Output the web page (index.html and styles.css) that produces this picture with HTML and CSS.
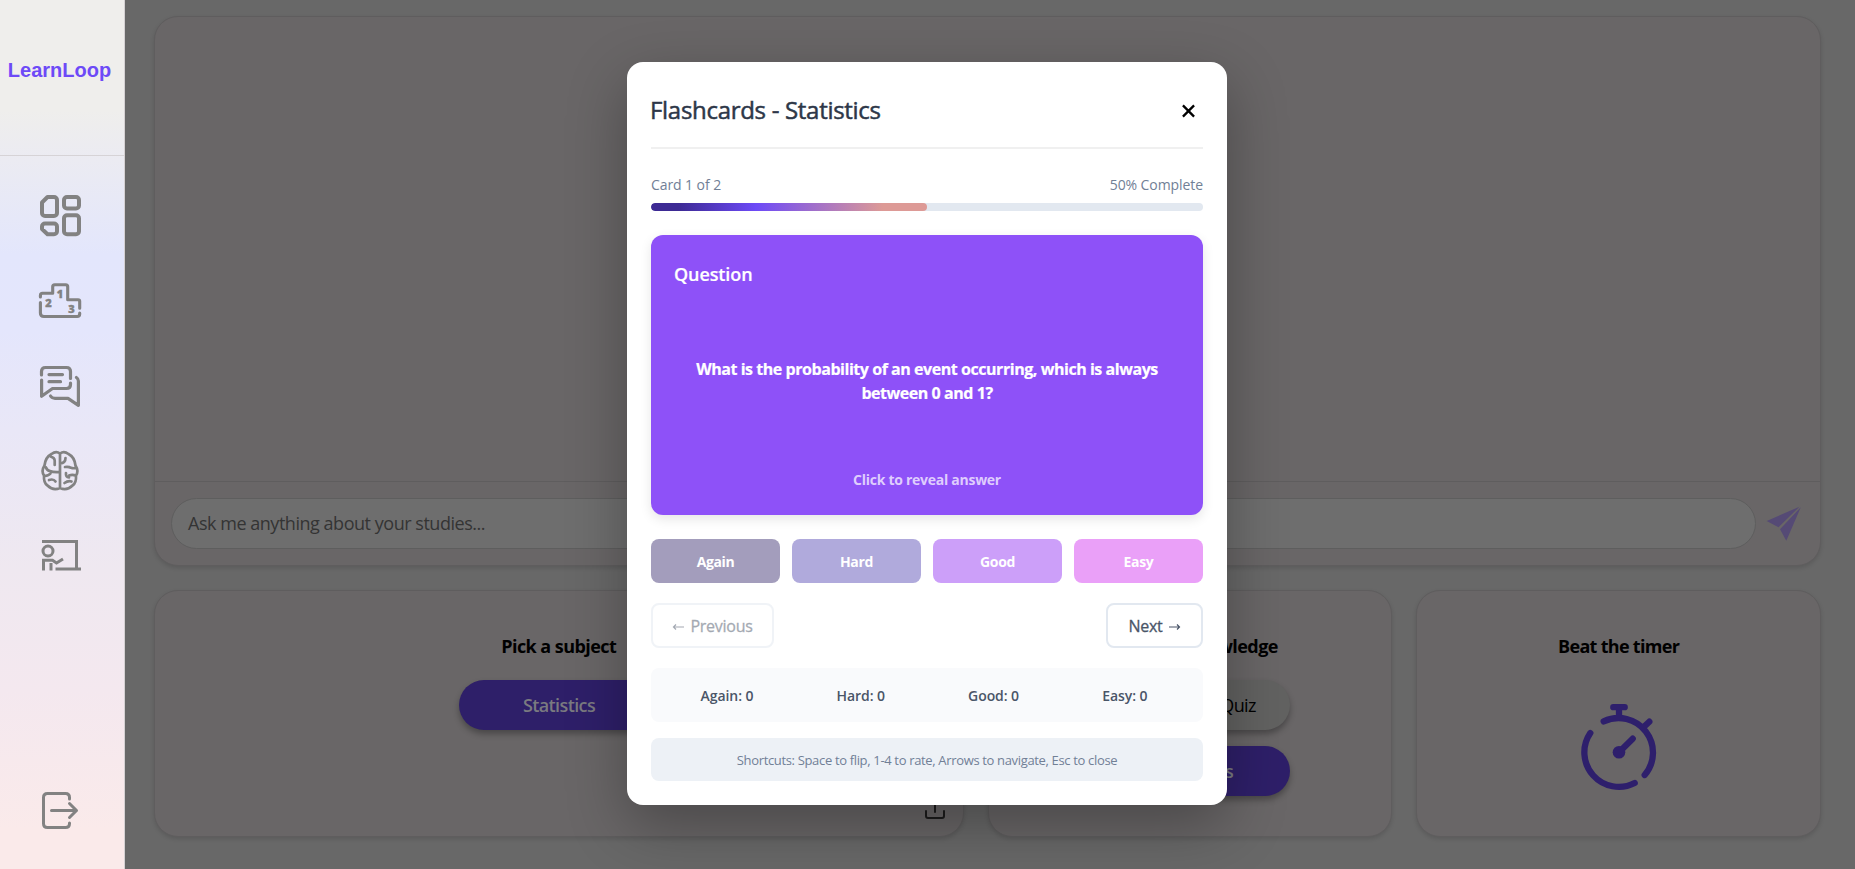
FILE: index.html
```html
<!DOCTYPE html>
<html lang="en">
<head>
<meta charset="utf-8">
<title>LearnLoop</title>
<link rel="stylesheet" href="styles.css">
</head>
<body>
<div class="app">
  <aside class="sidebar">
    <div class="brand"><span class="brand-name">LearnLoop</span></div>
    <nav class="nav">
      <svg class="nav-icon" viewBox="0 0 50 50"><g fill="none" stroke="currentColor" stroke-width="4" stroke-linejoin="round"><path d="M12.500 7h6.500a3 3 0 0 1 3 3v13a3 3 0 0 1-3 3H10a3 3 0 0 1-3-3V12.500z"/><rect x="29" y="7" width="15" height="11.500" rx="3"/><rect x="29" y="25.200" width="15" height="19" rx="3"/><path d="M10 33.500h9a3 3 0 0 1 3 3v4.700a3 3 0 0 1-3 3H12.500L7 39V36.500a3 3 0 0 1 3-3z"/></g></svg>
      <svg class="nav-icon" viewBox="0 0 50 50"><g fill="none" stroke="currentColor" stroke-width="3.100" stroke-linecap="round" stroke-linejoin="round"><path d="M5.400 22V20.500q0-2.200 2.200-2.200H17.700v-6.500q0-2 2-2h11q2 0 2 2v12.900h10.300q1.700 0 1.700 1.700v6.800M44.700 38v1q0 2.500-2.500 2.500H9q-3.600 0-3.600-3.600V27.500"/></g><g fill="currentColor" class="podium-digits"><text x="21.700" y="23.200">1</text><text x="10.300" y="32">2</text><text x="33.300" y="38">3</text></g></svg>
      <svg class="nav-icon" viewBox="0 0 50 50"><g fill="none" stroke="currentColor" stroke-width="3.200" stroke-linecap="round" stroke-linejoin="round"><path d="M6.500 15V11.500q0-4 4-4h21q4 0 4 4V18.500M35.500 23v1.500q0 4-4 4H17.500L6.600 36.300V20M14 14.600h13.500M14 21.700h11.500M15.500 36q1.500 2.300 4.500 2.300h13l10.400 7V21q0-2.300-2-3.500"/></g></svg>
      <svg class="nav-icon" viewBox="0 0 50 50"><g fill="none" stroke="currentColor" stroke-width="2.700" stroke-linecap="round" stroke-linejoin="round"><path d="M25 8.500Q21 5.500 16.500 9 10.500 12 9.500 20.500 6 26 9 30.500 8.500 38 12.500 40.500 18 46 25 43M25 8.500Q29 5.500 33.500 9 39.500 12 40.500 20.500 44 26 41 30.500 41.500 38 37.500 40.500 32 46 25 43M25 8.500V43M16 11.700q3.500 .8 3.700 3.800v4.500M11 22.500q1 3 4 3.500 3 1.500 10 1M9.500 31q4.500-.5 6-2.500M14 35q4.500-1.500 6.500 1.500M25 18.500q5.500-.5 5.500-5.500M30 22q4-.5 6 .8 3 1 5-.3M31 28q-.5 4.500 3 4.500M34 30.500q4-1.500 7 .5M29.500 38q3.500-2.500 7-1.500"/></g></svg>
      <svg class="nav-icon" viewBox="0 0 50 50"><g fill="none" stroke="currentColor" stroke-width="3"><path d="M7 11.500h34.500v28M20.500 39H46M8.500 40.500V30.300h9l4 2.700 6.500-4M16 40.500V33"/><circle cx="13" cy="21" r="5"/></g></svg>
    </nav>
    <div class="logout"><svg class="nav-icon" viewBox="0 0 50 50"><g fill="none" stroke="currentColor" stroke-width="3" stroke-linecap="round" stroke-linejoin="round"><path d="M34.500 12V10.500q0-4-4-4H12.500q-4 0-4 4v26q0 4 4 4h18q4 0 4-4V36M16.500 23.500h25M34.500 16.500l7 7-7 7"/></g></svg></div>
  </aside>

  <main class="content">
    <section class="panel chat">
      <div class="messages"></div>
      <div class="composer">
        <div class="prompt"><span class="prompt-text">Ask me anything about your studies...</span></div>
        <svg class="send" viewBox="0 0 36 36"><path fill="currentColor" d="M33.500 .7L.7 15l11.800 6.300zM34.800 1.200L14 23.300l6.300 11.500z"/></svg>
      </div>
    </section>
    <div class="row">
      <section class="panel tile">
        <h2 class="tile-title">Pick a subject</h2>
        <div class="pills subject-pills"><span class="pill pill-primary"><span class="pill-label">Statistics</span></span></div>
        <svg class="upload" viewBox="0 0 24 24"><path fill="none" stroke="currentColor" stroke-width="2" stroke-linecap="round" stroke-linejoin="round" d="M3 14v5a2 2 0 0 0 2 2h14a2 2 0 0 0 2-2v-5M12 15V3M7 7l5-5 5 5"/></svg>
      </section>
      <section class="panel tile">
        <h2 class="tile-title">Test your knowledge</h2>
        <div class="pills test-pills">
          <span class="pill pill-muted"><span class="pill-label">Quiz</span></span>
          <span class="pill pill-primary"><span class="pill-label">Flashcards</span></span>
        </div>
      </section>
      <section class="panel tile">
        <h2 class="tile-title timer-title">Beat the timer</h2>
        <svg class="timer" viewBox="0 0 80 90"><g fill="none" stroke="currentColor" stroke-width="6.300" stroke-linecap="round"><path d="M34.300 5.200H45.700M40 6v9M24.700 19.400A34.500 34.500 0 0 1 65.700 73M55.700 81A34.500 34.500 0 0 1 11.300 31M65 24.700l5.300-5M40 50.300l13.700-13.600"/></g><circle cx="40" cy="50.300" r="6.300" fill="currentColor"/></svg>
      </section>
    </div>
  </main>
</div>

<div class="overlay">
  <div class="modal">
    <header class="modal-header">
      <h1 class="modal-title">Flashcards - Statistics</h1>
      <svg class="close" viewBox="0 0 14 14"><path stroke="currentColor" stroke-width="2.500" d="M1 1l12 12M13 1L1 13"/></svg>
    </header>
    <div class="progress-info"><span class="count">Card 1 of 2</span><span class="percent">50% Complete</span></div>
    <div class="bar"><div class="bar-fill" style="width:50%"></div></div>
    <div class="flashcard">
      <div class="card-label"><span>Question</span></div>
      <p class="question">What is the probability of an event occurring, which is always<br>between 0 and 1?</p>
      <div class="hint"><span>Click to reveal answer</span></div>
    </div>
    <div class="ratings">
      <span class="rate again">Again</span><span class="rate hard">Hard</span><span class="rate good">Good</span><span class="rate easy">Easy</span>
    </div>
    <div class="pager">
      <span class="page-btn prev"><svg class="arrow" viewBox="0 0 12 8"><path d="M12 4H1.500M4 1.500L1.500 4 4 6.500"/></svg><span>Previous</span></span>
      <span class="page-btn next"><span>Next</span><svg class="arrow" viewBox="0 0 12 8"><path d="M0 4h10.500M8 1.500L10.500 4 8 6.500"/></svg></span>
    </div>
    <div class="stats"><span>Again: 0</span><span>Hard: 0</span><span>Good: 0</span><span>Easy: 0</span></div>
    <div class="shortcuts"><span>Shortcuts: Space to flip, 1-4 to rate, Arrows to navigate, Esc to close</span></div>
  </div>
</div>
</body>
</html>
```
FILE: styles.css
```css
* { box-sizing: border-box; }
body {
  margin: 0;
  height: 869px;
  overflow: hidden;
  font-family: "Open Sans", "Noto Sans", sans-serif;
  background: #686868;
}
h1, h2, p { margin: 0; }
.app { display: flex; height: 869px; }

.sidebar {
  width: 125px;
  flex: none;
  display: flex;
  flex-direction: column;
  border-right: 1px solid #d5d1d3;
  color: #828282;
  background: linear-gradient(180deg, #efeeec 0, #efeeec 110px, #ebebf2 160px, #e3e6fc 255px, #e4e6fc 330px, #e9e7f7 430px, #efe8f0 570px, #f4e8ef 690px, #faeaea 830px, #faeaea 100%);
}
.brand {
  height: 156px;
  padding-top: 57px;
  border-bottom: 1px solid #d6d3d6;
  text-align: center;
}
.brand-name {
  font: bold 20px/26px "Liberation Sans", Arial, sans-serif;
  color: #6d4af7;
  margin-right: 5px;
}
.nav { display: flex; flex-direction: column; gap: 35px; padding: 34px 0 0 35px; }
.nav-icon { display: block; width: 50px; height: 50px; }
.podium-digits { font: 800 11px "Open Sans", sans-serif; stroke: currentColor; stroke-width: 0.400px; }
.logout { margin-top: auto; padding: 0 0 32px 35px; }

.content {
  flex: 1;
  padding: 16px 34px 32px 29px;
  display: flex;
  flex-direction: column;
  gap: 24px;
  color: #000;
}
.panel {
  background: #696667;
  border: 1px solid #5f5d5e;
  border-radius: 24px;
  box-shadow: 0 2px 4px rgba(0, 0, 0, 0.13);
}
.chat { height: 550px; display: flex; flex-direction: column; }
.messages { flex: 1; }
.composer {
  height: 84px;
  border-top: 1px solid #5f5d5e;
  padding: 16px 18px 16px 16px;
  display: flex;
  justify-content: space-between;
}
.prompt {
  width: 1585px;
  height: 51px;
  border: 1px solid #5e5e5e;
  border-radius: 26px;
  background: #6e6e6e;
  padding-left: 16px;
  font-size: 18px;
  line-height: 49px;
  color: #343434;
}
.prompt-text { letter-spacing: -0.470px; }
.send { width: 36px; height: 36px; margin: 8px 0 0; color: #554a75; }

.row { flex: none; display: grid; grid-template-columns: 2fr 1fr 1fr; gap: 24px; height: 247px; }
.tile { position: relative; display: flex; flex-direction: column; align-items: center; padding-top: 41px; }
.tile-title { font-size: 18px; line-height: 28px; font-weight: 700; letter-spacing: -0.550px; }
.timer-title { letter-spacing: -0.700px; }
.pills { display: grid; gap: 16px; margin-top: 20px; width: 200px; }
.subject-pills { align-self: flex-start; margin-left: 304px; }
.pill { height: 50px; border-radius: 25px; box-shadow: 0 4px 6px rgba(0, 0, 0, 0.3); text-align: center; font-size: 18px; line-height: 50px; }
.pill-primary { background: #2e1f69; color: #7a7a80; font-weight: 600; }
.pill-muted { background: #626261; text-align: right; padding-right: 34px; }
.pill-label { letter-spacing: -0.600px; }
.upload { position: absolute; right: 16px; bottom: 15px; width: 24px; height: 24px; color: #1c1c1c; }
.timer { width: 80px; height: 90px; margin-top: 42px; color: #2e1f6c; }

.overlay { position: absolute; inset: 0; padding: 62px 0 0 627px; }
.modal {
  width: 600px;
  height: 743px;
  padding: 24px;
  border-radius: 16px;
  background: #fff;
  box-shadow: 0 20px 60px rgba(0, 0, 0, 0.3);
}
.modal-header {
  height: 63px;
  border-bottom: 2px solid #f0f0f0;
  padding: 0 8px 13px 0;
  display: flex;
  justify-content: space-between;
  align-items: center;
}
.modal-title {
  font-size: 24px;
  line-height: 34px;
  font-weight: 400;
  color: #2d3748;
  letter-spacing: -0.300px;
  margin-left: -1px;
  -webkit-text-stroke: 0.500px #2d3748;
}
.close { width: 13px; height: 14px; margin-top: 2px; color: #000; }
.progress-info {
  margin-top: 24px;
  height: 22px;
  display: flex;
  justify-content: space-between;
  font-size: 14px;
  line-height: 23px;
  letter-spacing: -0.080px;
  color: #718096;
}
.bar { margin-top: 8px; height: 8px; border-radius: 4px; background: #e2e8f0; overflow: hidden; }
.bar-fill { height: 8px; border-radius: 4px; background: linear-gradient(90deg, #3d2a94 0, #3d2a94 10%, #6d4af7 38%, #dd9a96 84%, #dd9a96 100%); }
.flashcard {
  margin-top: 24px;
  height: 280px;
  padding: 24px;
  border-radius: 12px;
  background: #8e51f8;
  box-shadow: 0 4px 12px rgba(0, 0, 0, 0.1);
  color: #fff;
  display: flex;
  flex-direction: column;
  justify-content: space-between;
}
.card-label { font-size: 18px; line-height: 30px; font-weight: 600; letter-spacing: -0.100px; margin-left: -1px; -webkit-text-stroke: 0.200px #fff; }
.question { font-size: 16px; line-height: 24px; font-weight: 700; text-align: center; letter-spacing: -0.450px; margin-top: 4px; -webkit-text-stroke: 0.200px #fff; }
.hint { font-size: 14px; line-height: 22px; font-weight: 700; text-align: center; color: #dfcdfd; letter-spacing: -0.270px; }
.ratings { margin-top: 24px; display: grid; grid-template-columns: repeat(4, 1fr); gap: 12px; }
.rate { height: 44px; border-radius: 8px; text-align: center; font-size: 14px; line-height: 46px; font-weight: 700; color: #fff; letter-spacing: -0.350px; }
.again { background: #a39dbc; }
.hard { background: #b0aadc; }
.good { background: #cc9ff9; }
.easy { background: #eaa0f8; }
.pager { margin-top: 20px; display: flex; justify-content: space-between; }
.page-btn {
  height: 45px;
  border: 2px solid #e2e8f0;
  border-radius: 8px;
  font-size: 16px;
  color: #4a5568;
  -webkit-text-stroke: 0.300px #4a5568;
  display: flex;
  align-items: center;
  justify-content: center;
  gap: 6px;
  letter-spacing: -0.250px;
}
.prev { width: 123px; opacity: 0.5; }
.next { width: 97px; }
.arrow { width: 12px; height: 8px; fill: none; stroke: currentColor; stroke-width: 1.200; margin-top: 2px; }
.stats {
  margin-top: 20px;
  height: 54px;
  border-radius: 8px;
  background: #f9fafc;
  display: flex;
  justify-content: space-around;
  align-items: center;
  padding: 0 14px 0 8px;
  font-size: 14px;
  font-weight: 600;
  color: #4a5568;
  letter-spacing: -0.080px;
}
.shortcuts {
  margin-top: 16px;
  height: 43px;
  border-radius: 8px;
  background: #edf1f6;
  text-align: center;
  font-size: 13px;
  line-height: 45px;
  color: #718096;
  letter-spacing: -0.340px;
}
```
